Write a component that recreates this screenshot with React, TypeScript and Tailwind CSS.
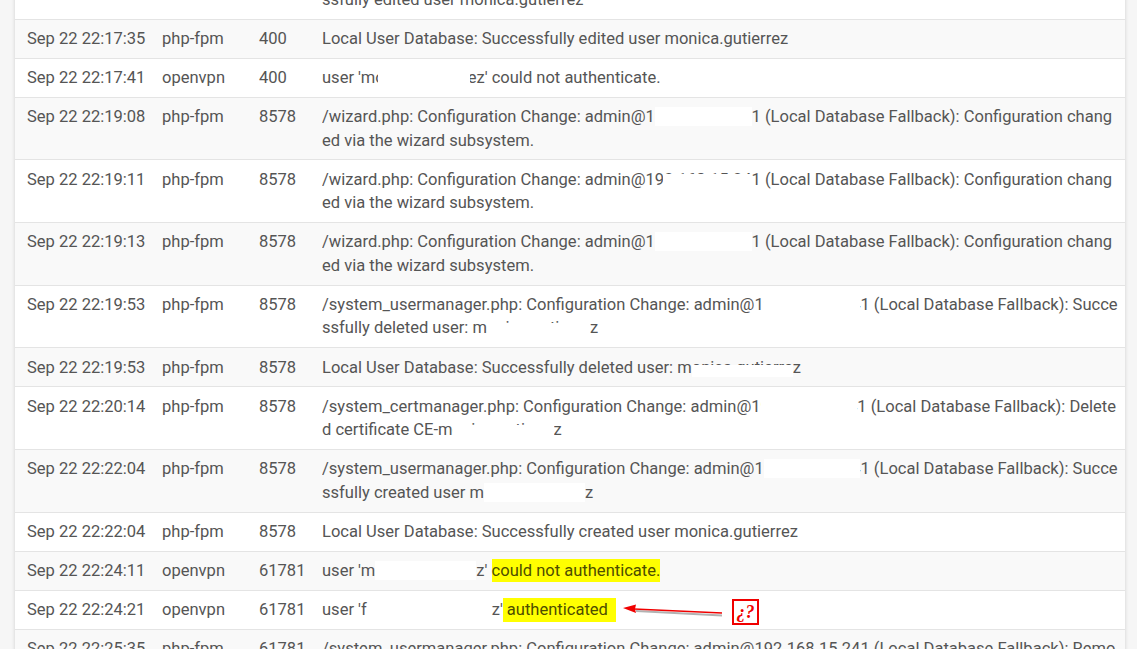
import React from 'react'

// white box laid over the text that was blanked out in the capture
const Hide = ({ text, className }: { text: string; className: string }) => {
  return (
    <span className="relative">
      {text}
      <span className={`absolute bg-white ${className}`} />
    </span>
  )
}

const Row = ({ time, proc, pid, children }: { time: string; proc: string; pid: string; children: React.ReactNode }) => {
  return (
    <div className="flex border-b border-[#e4e4e4] py-[7.2px] pl-3 odd:bg-white even:bg-[#f9f9f9]">
      <div className="w-[135px] shrink-0">{time}</div>
      <div className="w-[97px] shrink-0">{proc}</div>
      <div className="w-[63px] shrink-0">{pid}</div>
      <div className="min-w-0 flex-1 overflow-hidden whitespace-nowrap">{children}</div>
    </div>
  )
}

const Ip = ({ className }: { className: string }) => (
  <>
    admin@1
    <Hide text="92.168.15.24" className={className} />1
  </>
)

const fallback = ' (Local Database Fallback): '

export default function App() {
  return (
    <div className="h-[649px] overflow-hidden bg-[#f6f6f6] font-['Roboto',sans-serif] text-[16.54px] leading-[23.64px] text-[#555555]">
      <div className="relative mx-[15px] -mt-[43px] w-[1110px] bg-white shadow-[0_0_4px_rgba(0,0,0,0.16)]">
        <Row time="" proc="" pid="">
          <div>/system_usermanager.php: Configuration Change: admin@192.168.15.241{fallback}Succe</div>
          <div>ssfully edited user monica.gutierrez</div>
        </Row>
        <Row time="Sep 22 22:17:35" proc="php-fpm" pid="400">
          Local User Database: Successfully edited user monica.gutierrez
        </Row>
        <Row time="Sep 22 22:17:41" proc="openvpn" pid="400">
          user 'm
          <Hide text="onica.gutierr" className="inset-y-0 left-[3px] -right-[2px]" />
          ez' could not authenticate.
        </Row>
        <Row time="Sep 22 22:19:08" proc="php-fpm" pid="8578">
          <div>
            /wizard.php: Configuration Change: <Ip className="inset-y-0 left-0 right-0" />
            {fallback}Configuration chang
          </div>
          <div>ed via the wizard subsystem.</div>
        </Row>
        <Row time="Sep 22 22:19:11" proc="php-fpm" pid="8578">
          <div>
            /wizard.php: Configuration Change: <Ip className="top-[4.5px] bottom-0 left-[8px] right-0" />
            {fallback}Configuration chang
          </div>
          <div>ed via the wizard subsystem.</div>
        </Row>
        <Row time="Sep 22 22:19:13" proc="php-fpm" pid="8578">
          <div>
            /wizard.php: Configuration Change: <Ip className="inset-y-0 left-0 right-0" />
            {fallback}Configuration chang
          </div>
          <div>ed via the wizard subsystem.</div>
        </Row>
        <Row time="Sep 22 22:19:53" proc="php-fpm" pid="8578">
          <div>
            /system_usermanager.php: Configuration Change: <Ip className="inset-y-0 left-0 right-0" />
            {fallback}Succe
          </div>
          <div>
            ssfully deleted user: m
            <Hide text="onica.gutierre" className="top-[5px] bottom-0 left-0 -right-[2px]" />
            <span className="ml-[2px]">z</span>
          </div>
        </Row>
        <Row time="Sep 22 22:19:53" proc="php-fpm" pid="8578">
          Local User Database: Successfully deleted user: m
          <Hide text="onica.gutierre" className="top-[7px] bottom-0 left-0 right-0" />z
        </Row>
        <Row time="Sep 22 22:20:14" proc="php-fpm" pid="8578">
          <div>
            /system_certmanager.php: Configuration Change: <Ip className="inset-y-0 left-0 right-0" />
            {fallback}Delete
          </div>
          <div>
            d certificate CE-m
            <Hide text="onica.gutierre" className="top-[5px] bottom-0 left-0 right-0" />z
          </div>
        </Row>
        <Row time="Sep 22 22:22:04" proc="php-fpm" pid="8578">
          <div>
            /system_usermanager.php: Configuration Change: <Ip className="inset-y-0 left-0 right-0" />
            {fallback}Succe
          </div>
          <div>
            ssfully created user m
            <Hide text="onica.gutierre" className="inset-y-0 left-0 right-0" />z
          </div>
        </Row>
        <Row time="Sep 22 22:22:04" proc="php-fpm" pid="8578">
          Local User Database: Successfully created user monica.gutierrez
        </Row>
        <Row time="Sep 22 22:24:11" proc="openvpn" pid="61781">
          user 'm
          <Hide text="onica.gutierre" className="inset-y-0 left-0 right-0" />
          z' <span className="bg-[#ffff00] py-[2px] text-[#4d4d00]">could not authenticate.</span>
        </Row>
        <Row time="Sep 22 22:24:21" proc="openvpn" pid="61781">
          user 'f<span className="inline-block w-[125px]" />
          z'
          <span className="bg-[#ffff00] py-[3px] pr-2 pl-1 text-[#4d4d00]">authenticated</span>
        </Row>
        <Row time="Sep 22 22:25:35" proc="php-fpm" pid="61781">
          <div>/system_usermanager.php: Configuration Change: admin@192.168.15.241{fallback}Remo</div>
        </Row>
        <svg className="absolute left-[605px] top-[643px] h-[30px] w-[115px]" viewBox="0 0 115 30" fill="none">
          <path d="M16 11 L102 15.5" className="blur-[0.7px]" stroke="#000000" strokeOpacity="0.3" strokeWidth="2" />
          <path d="M14 9 L102 13" stroke="#f00000" strokeWidth="1.6" />
          <path d="M3 8 L16 4.5 L15 9 L16 13 Z" fill="#f00000" />
        </svg>
        <div className="absolute left-[717px] top-[642px] flex h-[26px] w-[27px] items-center justify-center border-2 border-[#f00000] bg-white font-['Liberation_Serif',serif] text-[18px] font-bold italic leading-none text-[#f00000]">
          ¿?
        </div>
      </div>
    </div>
  )
}
